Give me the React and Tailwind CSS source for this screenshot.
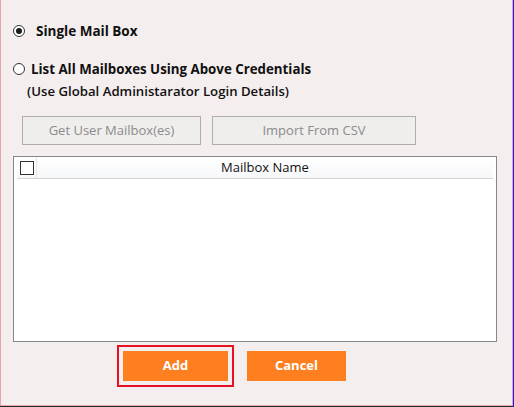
function Radio({ checked }) {
  return (
    <span className="flex h-[12px] w-[12px] shrink-0 items-center justify-center rounded-full border border-[#333333] bg-white">
      {checked && <span className="h-[6px] w-[6px] rounded-full bg-[#1a1a1a]" />}
    </span>
  );
}

export default function App() {
  return (
    <div className="h-[407px] w-[514px] border-r border-b border-r-[#1a1aff] border-b-[#2a2a2a] bg-[#f4eeee] font-['Open_Sans',sans-serif] text-[#111111]">
      <div className="flex h-full flex-col border-x border-b border-[#e8a4a8] pl-[12px]">
        <label className="mt-[24px] flex items-center">
          <Radio checked />
          <span className="ml-[11px] text-[13.5px] font-bold leading-[14px]">Single Mail Box</span>
        </label>

        <label className="mt-[24px] flex items-center">
          <Radio />
          <span className="ml-[6px] text-[13.3px] font-bold leading-[14px]">
            List All Mailboxes Using Above Credentials
          </span>
        </label>
        <p className="ml-[14px] mt-[8px] text-[13.2px] font-semibold leading-[14px]">
          (Use Global Administarator Login Details)
        </p>

        <div className="ml-[9px] mt-[18px] flex gap-[11px]">
          <button
            type="button"
            className="h-[29px] w-[179px] border border-[#adadad] bg-[#f0eded] text-[13px] text-[#8b8b8b]"
          >
            Get User Mailbox(es)
          </button>
          <button
            type="button"
            className="h-[29px] w-[204px] border border-[#adadad] bg-[#f0eded] text-[13px] text-[#8b8b8b]"
          >
            Import From CSV
          </button>
        </div>

        <div className="mt-[11px] flex h-[186px] w-[484px] flex-col border border-[#828790] bg-white">
          <div className="mx-[3px] flex h-[22px] border-b border-[#d5d5d5] bg-gradient-to-b from-white to-[#f6f7f9]">
            <div className="flex w-[20px] items-center justify-center border-r border-[#e5e5e5]">
              <span className="h-[14px] w-[14px] border border-[#333333] bg-white" />
            </div>
            <div className="flex flex-1 items-center justify-center text-[13px] leading-none">Mailbox Name</div>
          </div>
        </div>

        <div className="mt-[3px] flex pl-[104px]">
          <div className="border-2 border-[#e81123] p-[4px]">
            <button type="button" className="h-[30px] w-[105px] bg-[#fd7f20] text-[13px] font-bold text-white">
              Add
            </button>
          </div>
          <button
            type="button"
            className="ml-[13px] mt-[6px] h-[30px] w-[99px] bg-[#fd7f20] text-[13px] font-bold text-white"
          >
            Cancel
          </button>
        </div>
      </div>
    </div>
  );
}
